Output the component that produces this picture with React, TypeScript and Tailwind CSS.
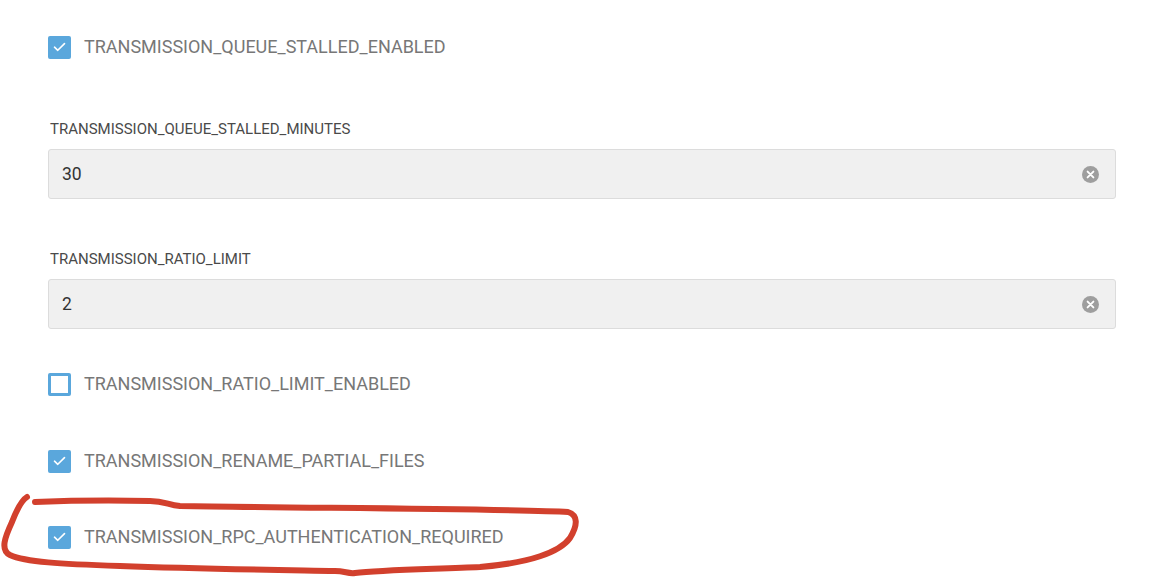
import React from "react";

const font = { fontFamily: "Roboto, 'Noto Sans', sans-serif" };

function Check({ checked, label }: { checked: boolean; label: string }) {
  return (
    <div className="flex items-center h-[24px]">
      {checked ? (
        <div className="w-[23px] h-[23px] rounded-[2px] bg-[#5aa7dc] flex items-center justify-center">
          <svg width="13" height="10" viewBox="0 0 13 10" fill="none">
            <path d="M1.5 5.2 L4.8 8.3 L11.5 1.6" stroke="white" strokeWidth="1.6" strokeLinecap="round" strokeLinejoin="round" />
          </svg>
        </div>
      ) : (
        <div className="w-[23px] h-[23px] rounded-[2px] border-[3px] border-[#5aa7dc] bg-white" />
      )}
      <span className="ml-[13px] text-[18px] text-[#777777] leading-none">{label}</span>
    </div>
  );
}

function Field({ label, value }: { label: string; value: string }) {
  return (
    <div>
      <div className="text-[15px] text-[#4a4a4a] leading-[16px] pl-[2px]">{label}</div>
      <div className="mt-[12px] h-[50px] w-[1068px] rounded-[3px] border border-[#dcdcdc] bg-[#f0f0f0] flex items-center pl-[13px] pr-[16px]">
        <span className="flex-1 text-[17.5px] text-[#333333]">{value}</span>
        <svg width="17" height="17" viewBox="0 0 17 17">
          <circle cx="8.5" cy="8.5" r="8.5" fill="#9e9e9e" />
          <path d="M5.6 5.6 L11.4 11.4 M11.4 5.6 L5.6 11.4" stroke="white" strokeWidth="1.9" strokeLinecap="round" />
        </svg>
      </div>
    </div>
  );
}

export default function App() {
  return (
    <div className="relative w-[1158px] h-[577px] bg-white overflow-hidden" style={font}>
      <div className="pl-[48px] pt-[35px] flex flex-col">
        <Check checked label="TRANSMISSION_QUEUE_STALLED_ENABLED" />
        <div className="mt-[62px]">
          <Field label="TRANSMISSION_QUEUE_STALLED_MINUTES" value="30" />
        </div>
        <div className="mt-[52px]">
          <Field label="TRANSMISSION_RATIO_LIMIT" value="2" />
        </div>
        <div className="mt-[43px]">
          <Check checked={false} label="TRANSMISSION_RATIO_LIMIT_ENABLED" />
        </div>
        <div className="mt-[53px]">
          <Check checked label="TRANSMISSION_RENAME_PARTIAL_FILES" />
        </div>
        <div className="mt-[52px]">
          <Check checked label="TRANSMISSION_RPC_AUTHENTICATION_REQUIRED" />
        </div>
      </div>
      <svg className="absolute inset-0 pointer-events-none" width="1158" height="577" viewBox="0 0 1158 577">
        <path
          d="M 27 497 C 22 500, 17 509, 12 522 C 5 537, 0 550, 10 555 C 25 562, 60 564, 120 566 C 200 569, 280 570, 335 571 C 345 571, 348 574, 355 573 C 380 570, 440 569, 480 567 C 530 563, 560 552, 570 538 C 578 525, 578 515, 568 512 C 520 509, 300 508, 180 506 C 168 505, 165 501, 150 501 C 100 500, 60 501, 35 502"
          fill="none"
          stroke="#d2402d"
          strokeWidth="6"
          strokeLinecap="round"
          strokeLinejoin="round"
        />
      </svg>
    </div>
  );
}
